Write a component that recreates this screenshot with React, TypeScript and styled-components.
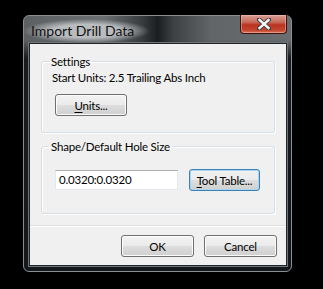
import styled, { createGlobalStyle } from "styled-components";

const GlobalStyle = createGlobalStyle`
  html, body {
    margin: 0;
    background: #000;
  }
  body {
    font-family: Lato, "Liberation Sans", Arial, sans-serif;
    font-size: 11.5px;
    letter-spacing: -0.2px;
    color: #000;
  }
`;

const Screen = styled.div`
  width: 323px;
  height: 289px;
  padding: 15px 0 0 23px;
  box-sizing: border-box;
`;

const Window = styled.div`
  width: 269px;
  height: 257px;
  box-sizing: border-box;
  border: 1px solid #8a8e91;
  border-radius: 6px;
  padding: 0 4px 5px 5px;
  display: flex;
  flex-direction: column;
  background:
    linear-gradient(180deg, rgba(22, 28, 32, 0) 0, rgba(22, 28, 32, 0) 24px, #161c20 42px, #12181c 100%),
    linear-gradient(90deg, #5c6062 0%, #6b6e71 30%, #3a3d3f 44%, #1b1d1f 50%, #3e4143 56%, #626568 70%, #6b6e70 100%);
`;

const TitleBar = styled.div`
  height: 27px;
  display: flex;
  align-items: flex-start;
  justify-content: space-between;
`;

const Title = styled.div`
  margin: 3px 0 0 -6px;
  padding: 2px 16px 3px 8px;
  font-size: 14px;
  letter-spacing: 0;
  line-height: 19px;
  color: #111;
  background: radial-gradient(ellipse closest-side at 50% 50%, rgba(190, 193, 195, 0.95) 55%, rgba(190, 193, 195, 0) 100%);
`;

const CloseButton = styled.div`
  width: 47px;
  height: 19px;
  margin: -1px 0 0 0;
  box-sizing: border-box;
  border: 1px solid #3b1410;
  border-top: none;
  border-radius: 0 0 4px 4px;
  display: flex;
  align-items: center;
  justify-content: center;
  background: linear-gradient(180deg, #d9a196 0%, #c76a5a 40%, #b9321d 55%, #c5472f 85%, #d9775c 100%);
  box-shadow: inset 0 0 0 1px rgba(255, 200, 190, 0.45);
`;

const Client = styled.div`
  flex: 1;
  background: #f0f0f0;
  border: 1px solid #1d2326;
  box-shadow: 0 0 0 1px #6f7579;
  display: flex;
  flex-direction: column;
`;

const Body = styled.div`
  flex: 1;
  padding: 10px 11px 0 11px;
  display: flex;
  flex-direction: column;
  gap: 6px;
`;

const Group = styled.fieldset<{ $height: number }>`
  margin: 0;
  height: ${(p) => p.$height}px;
  box-sizing: border-box;
  border: 1px solid #d5dfe5;
  border-radius: 3px;
  padding: 0 10px 0 7px;
  box-shadow: inset 1px 1px 0 #fff, 1px 1px 0 #fff;
`;

const Legend = styled.legend`
  padding: 0 2px;
  line-height: 15px;
`;

const Line = styled.div`
  margin: 1px 0 0 3px;
  line-height: 15px;
  white-space: nowrap;
`;

const Row = styled.div<{ $top: number }>`
  display: flex;
  align-items: center;
  gap: 11px;
  margin: ${(p) => p.$top}px 0 0 6px;
`;

const Button = styled.div<{ $focused?: boolean; $width?: number }>`
  width: ${(p) => p.$width ?? 73}px;
  height: 22px;
  box-sizing: border-box;
  border: 1px solid ${(p) => (p.$focused ? "#3c7fb1" : "#707070")};
  border-radius: 3px;
  display: flex;
  align-items: center;
  justify-content: center;
  line-height: 15px;
  background: linear-gradient(180deg, #f2f2f2 0%, #ebebeb 48%, #dddddd 52%, #cfcfcf 100%);
  box-shadow: inset 0 0 0 1px ${(p) => (p.$focused ? "#a6d8f5" : "#fcfcfc")};
  white-space: nowrap;
`;

const Input = styled.div`
  width: 123px;
  height: 20px;
  box-sizing: border-box;
  border: 1px solid #e3e9ef;
  border-top-color: #abadb3;
  background: #fff;
  padding: 0 3px;
  line-height: 18px;
`;

const Footer = styled.div`
  height: 40px;
  border-top: 1px solid #dfdfdf;
  box-shadow: inset 0 1px 0 #fff;
  display: flex;
  justify-content: flex-end;
  align-items: flex-start;
  gap: 10px;
  padding: 9px 9px 0 0;
  box-sizing: border-box;
`;

const Key = styled.span`
  text-decoration: underline;
  text-underline-offset: 2px;
`;

export default function App() {
  return (
    <Screen>
      <GlobalStyle />
      <Window>
        <TitleBar>
          <Title>Import Drill Data</Title>
          <CloseButton>
            <svg width="14" height="12" viewBox="0 0 14 12">
              <path
                d="M2 1.5 L12 10.5 M12 1.5 L2 10.5"
                stroke="#3a3f44"
                strokeWidth="4.2"
                strokeLinecap="square"
              />
              <path
                d="M2.5 2 L11.5 10 M11.5 2 L2.5 10"
                stroke="#f4f6f8"
                strokeWidth="2.4"
                strokeLinecap="square"
              />
            </svg>
          </CloseButton>
        </TitleBar>
        <Client>
          <Body>
            <Group $height={79}>
              <Legend>Settings</Legend>
              <Line>Start Units: 2.5 Trailing Abs Inch</Line>
              <Row $top={9}>
                <Button $width={72}>
                  <span>
                    <Key>U</Key>nits...
                  </span>
                </Button>
              </Row>
            </Group>
            <Group $height={75}>
              <Legend>Shape/Default Hole Size</Legend>
              <Row $top={15}>
                <Input>0.0320:0.0320</Input>
                <Button $focused $width={71}>
                  <span>
                    <Key>T</Key>ool Table...
                  </span>
                </Button>
              </Row>
            </Group>
          </Body>
          <Footer>
            <Button>OK</Button>
            <Button>Cancel</Button>
          </Footer>
        </Client>
      </Window>
    </Screen>
  );
}
